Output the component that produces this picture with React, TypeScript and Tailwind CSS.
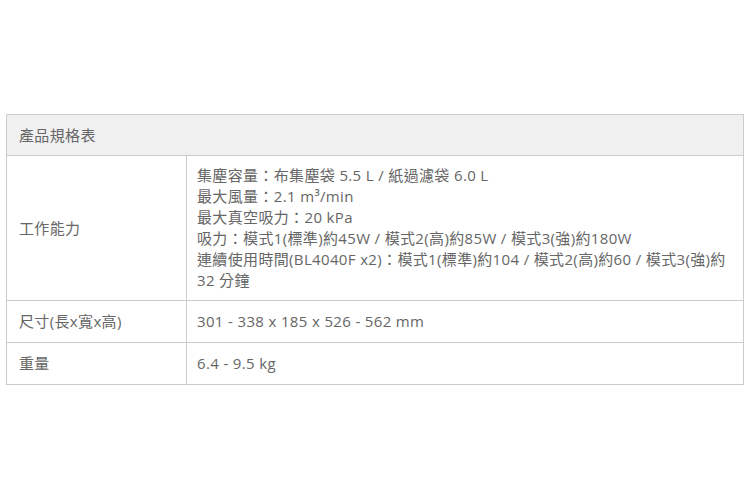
export default function App() {
  const font = { fontFamily: '"Open Sans", "Noto Sans CJK TC", sans-serif' };
  return (
    <div lang="zh-TW" className="w-[750px] h-[500px] bg-white pt-[114px] px-[6px]" style={font}>
      <table className="w-[738px] border-collapse text-[15px] leading-[21px] tracking-[0.35px] text-[#666]">
        <tbody>
          <tr>
            <td colSpan={2} className="border border-[#ccc] bg-[#f0f0f0] px-[12px] pt-[10px] pb-[9px]">產品規格表</td>
          </tr>
          <tr>
            <td className="w-[180px] border border-[#ccc] px-[12px] py-[9px] align-middle">工作能力</td>
            <td className="border border-[#ccc] px-[10px] py-[9px]">
              集塵容量：布集塵袋 5.5 L / 紙過濾袋 6.0 L<br />
              最大風量：2.1 m³/min<br />
              最大真空吸力：20 kPa<br />
              吸力：模式1(標準)約45W / 模式2(高)約85W / 模式3(強)約180W<br />
              連續使用時間(BL4040F x2)：模式1(標準)約104 / 模式2(高)約60 / 模式3(強)約<br />
              32 分鐘
            </td>
          </tr>
          <tr>
            <td className="border border-[#ccc] px-[12px] py-[10px]">尺寸(長x寬x高)</td>
            <td className="border border-[#ccc] px-[10px] py-[10px]">301 - 338 x 185 x 526 - 562 mm</td>
          </tr>
          <tr>
            <td className="border border-[#ccc] px-[12px] py-[10px]">重量</td>
            <td className="border border-[#ccc] px-[10px] py-[10px]">6.4 - 9.5 kg</td>
          </tr>
        </tbody>
      </table>
    </div>
  );
}
